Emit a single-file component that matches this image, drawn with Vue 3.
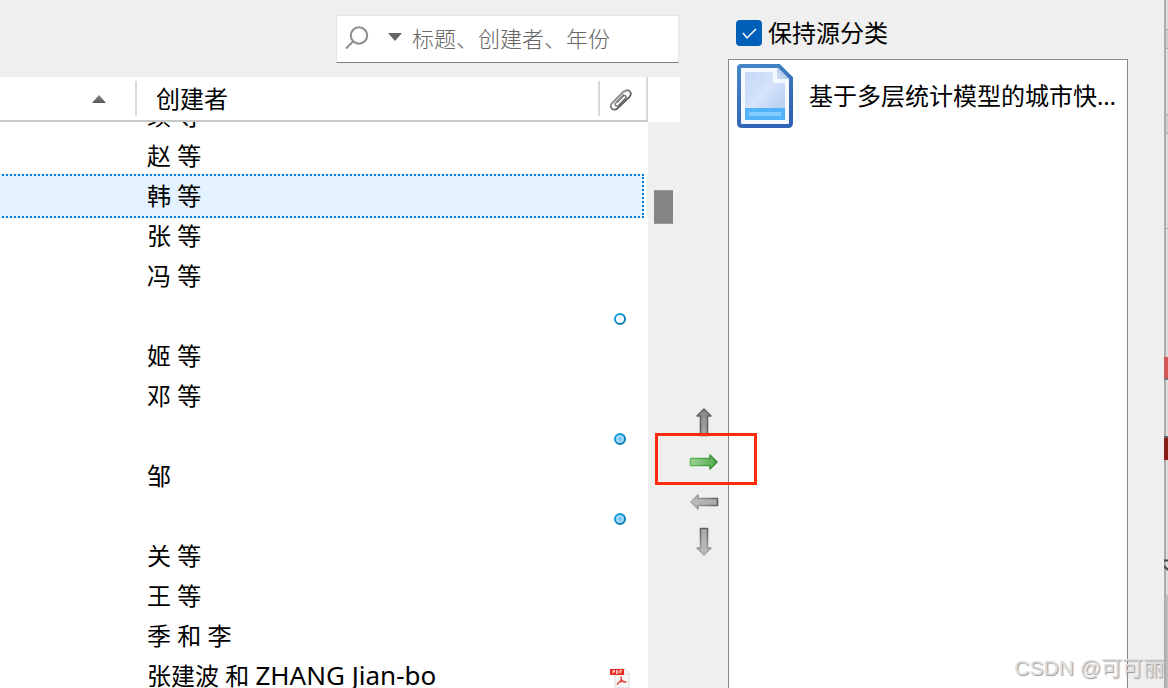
<script setup>
import { ref } from 'vue'

const rows = [
  { name: '续 等' },
  { name: '赵 等' },
  { name: '韩 等', selected: true },
  { name: '张 等' },
  { name: '冯 等' },
  { name: '', mark: 'open' },
  { name: '姬 等' },
  { name: '邓 等' },
  { name: '', mark: 'full' },
  { name: '邹' },
  { name: '', mark: 'full' },
  { name: '关 等' },
  { name: '王 等' },
  { name: '季 和 李' },
  { name: '张建波 和 ', latin: 'ZHANG Jian-bo', mark: 'pdf' },
]
const query = ref('')
const keep = ref(true)
const moves = [
  { label: '上移', turn: 'up' },
  { label: '添加', turn: 'right' },
  { label: '移除', turn: 'left' },
  { label: '下移', turn: 'down' },
]
</script>

<template>
  <main class="dialog">
    <section class="library">
      <div class="toolbar">
        <div class="search">
          <svg class="lens" width="24" height="24" viewBox="0 0 24 24" aria-hidden="true">
            <circle cx="14" cy="9.500" r="8.200" /><path d="M8 15.500 1 22.500" />
          </svg>
          <button class="drop" aria-label="搜索范围">
            <svg width="14" height="8" viewBox="0 0 14 8"><path d="M0 0h14L7 8z" fill="#646464" /></svg>
          </button>
          <input v-model="query" type="search" aria-label="搜索" placeholder="标题、创建者、年份" />
        </div>
      </div>
      <div class="tablewrap">
        <div class="clip">
          <table>
            <colgroup><col class="c-title" /><col /><col class="c-file" /></colgroup>
            <thead>
              <tr>
                <th class="sort" aria-label="标题">
                  <svg width="14" height="8" viewBox="0 0 14 8"><path d="M0 8h14L7 0z" fill="url(#sortg)" /><defs><linearGradient id="sortg" x2="0" y2="1"><stop stop-color="#888" /><stop offset="1" stop-color="#555" /></linearGradient></defs></svg>
                </th>
                <th class="creator">创建者</th>
                <th class="file" aria-label="附件">
                  <svg width="24" height="24" viewBox="0 0 24 24" fill="none" stroke-linecap="round" stroke-linejoin="round">
                    <defs><linearGradient id="clip" x2="1" y2="1"><stop offset=".2" stop-color="#aaa" /><stop offset=".8" stop-color="#3c3c3c" /></linearGradient></defs>
                    <path d="M8 14.500 14.500 8c1.600-1.300 3.600.6 2.200 2.200l-6.700 6.800c-2.800 2.600-5.400-.2-3-2.800l7.500-7.700" stroke="url(#clip)" stroke-width="1.300" />
                    <path d="M14.500 3.500 3.300 14.800c-4 4 1.200 9.500 5.200 5.500L20.500 8.800c3.500-4-1.300-8.500-5-5.300" stroke="url(#clip)" stroke-width="1.800" />
                  </svg>
                </th>
              </tr>
            </thead>
          </table>
          <div class="viewport">
            <table class="items">
              <colgroup><col class="c-title" /><col /><col class="c-file" /></colgroup>
              <tbody>
                <tr v-for="(row, i) in rows" :key="i" :class="{ selected: row.selected }">
                  <td class="lead"></td>
                  <td class="name">{{ row.name }}<span v-if="row.latin" class="latin">{{ row.latin }}</span></td>
                  <td class="mark">
                    <svg v-if="row.mark === 'pdf'" class="pdf" width="20" height="20" viewBox="0 0 20 20">
                      <path d="M5 1h10l4 4v15H5z" fill="#f6f6f6" stroke="#ddd" />
                      <path d="M14 1v5h5" fill="#fff" stroke="#ddd" />
                      <path d="M0 1h14v6H0z" fill="#e62c20" />
                      <path d="M3 5.500v-3h1.500v1.500H3M6.500 2.500v3h1.200l.6-1.500-.6-1.500zM10 5.500v-3h2M10 4h1.500" fill="none" stroke="#fff" stroke-width=".8" />
                      <path d="M11 9c1.500 1 0 3.500-3.500 7 0-2 6-3.500 8.500-2-2 .8-5-1.500-5-5z" fill="none" stroke="#e8443a" stroke-width="1.200" />
                    </svg>
                    <svg v-else-if="row.mark" width="12" height="12" viewBox="0 0 12 12">
                      <defs><linearGradient id="ring" x2="1" y2="1"><stop stop-color="#15a8e6" /><stop offset="1" stop-color="#0871a8" /></linearGradient></defs>
                      <circle cx="6" cy="6" r="5" :fill="row.mark === 'full' ? '#a5d8fa' : '#fff'" stroke="url(#ring)" stroke-width="2" />
                      <circle v-if="row.mark === 'full'" cx="6" cy="6" r="2" fill="#7ac5f3" />
                    </svg>
                  </td>
                </tr>
              </tbody>
            </table>
          </div>
        </div>
        <div class="scroll"><div class="corner"></div><div class="thumb"></div></div>
      </div>
    </section>

    <nav class="moves" aria-label="移动条目">
      <button v-for="m in moves" :key="m.turn" :class="m.turn" :aria-label="m.label">
        <svg width="30" height="18" viewBox="0 0 30 18">
          <defs>
            <linearGradient :id="'g' + m.turn">
              <stop :stop-color="m.turn === 'right' ? '#69b85f' : '#5c5c5c'" />
              <stop offset="1" :stop-color="m.turn === 'right' ? '#348c31' : m.turn === 'up' ? '#666' : '#b0b0b0'" />
            </linearGradient>
            <linearGradient :id="'f' + m.turn">
              <stop :stop-color="m.turn === 'right' ? '#a0d496' : '#aaa'" />
              <stop offset="1" :stop-color="m.turn === 'right' ? '#51a74b' : m.turn === 'up' ? '#858585' : '#bcbcbc'" />
            </linearGradient>
          </defs>
          <path d="M1.500 5.500H21V2l7 7-7 7v-3.500H1.500z" :fill="`url(#f${m.turn})`" :stroke="`url(#g${m.turn})`" stroke-width="1.600" stroke-linejoin="round" />
        </svg>
      </button>
      <div class="callout"></div>
    </nav>

    <section class="chosen">
      <label class="keep">
        <input v-model="keep" type="checkbox" />
        <svg class="tick" width="26" height="26" viewBox="0 0 26 26" aria-hidden="true"><path d="m7 13 4 5 9-9" fill="none" stroke="#fff" stroke-width="1.500" /></svg>
        <span>保持源分类</span>
      </label>
      <ul>
        <li>
          <svg width="58" height="66" viewBox="0 0 58 66" aria-hidden="true">
            <defs>
              <linearGradient id="edge" x2=".4" y2="1"><stop stop-color="#4787c8" /><stop offset="1" stop-color="#3062b5" /></linearGradient>
              <linearGradient id="sheet" x2="1" y2="1"><stop stop-color="#c3d7f5" /><stop offset=".45" stop-color="#d6e4fc" /><stop offset="1" stop-color="#adc8ea" /></linearGradient>
              <linearGradient id="fold" x1="1" x2="0" y2="1"><stop stop-color="#8fb4de" /><stop offset="1" stop-color="#d3e3f5" /></linearGradient>
            </defs>
            <path d="M5 3h38l12 12v45q0 3-3 3H6q-3 0-3-3V5q0-2 2-2z" fill="#f5f9ff" stroke="url(#edge)" stroke-width="4" />
            <path d="M9 9h28v11h12v36H9z" fill="url(#sheet)" />
            <path d="M41 4v12h12z" fill="url(#fold)" />
            <path d="M9 45h40v12H9z" fill="#51b3fa" />
            <path d="M13 49h32v4H13z" fill="#82ccff" />
          </svg>
          <span class="title">基于多层统计模型的城市快速路交通事故分析</span>
        </li>
      </ul>
    </section>

    <aside class="behind" aria-hidden="true">
      <i class="band one"></i><i class="band two"></i><i class="line"></i>
      <i class="red"></i><i class="red dark"></i>
      <svg class="scrap" width="4" height="14" viewBox="0 0 4 14"><path d="M0 1.500h4M0 7l4 4" stroke="#444" stroke-width="2" /></svg>
      <i class="foot"></i>
    </aside>
    <div class="watermark">CSDN @可可丽</div>
  </main>
</template>

<style>
body { margin: 0; overflow: hidden; }
</style>

<style scoped>
* { box-sizing: border-box; }
.dialog {
  position: relative;
  display: grid;
  grid-template-columns: minmax(0, 17fr) 48px minmax(0, 10fr) 36px 4px;
  height: 100vh;
  overflow: hidden;
  background: #efefef;
  color: #000;
  font: 24px/40px "Noto Sans", "Noto Sans CJK SC", sans-serif;
}
button { padding: 0; border: 0; background: none; display: flex; }
.library { display: flex; flex-direction: column; min-height: 0; }
.toolbar { display: flex; justify-content: flex-end; padding: 15px 1px 14px; }
.search {
  display: flex;
  align-items: center;
  width: 343px;
  height: 48px;
  padding: 0 8px;
  background: #fff;
  border: 1px solid #e6e6e6;
  border-bottom: 1px solid #808080;
}
.lens { fill: none; stroke: #8c8c8c; stroke-width: 2; margin-bottom: 2px; flex: none; }
.drop { margin: 0 10px 4px 19px; }
.search input {
  flex: 1;
  min-width: 0;
  padding: 0 0 4px;
  border: 0;
  outline: 0;
  background: none;
  font: 22px/32px "Noto Sans CJK SC", sans-serif;
  font-weight: 300;
}
.search input::placeholder { color: #666; opacity: 1; }
.tablewrap { display: flex; flex: 1; min-height: 0; }
.clip { flex: 1; min-width: 0; display: flex; flex-direction: column; background: #fff; }
table { width: 100%; border-collapse: separate; border-spacing: 0; table-layout: fixed; }
.c-title { width: 137px; }
.c-file { width: 48px; }
th { position: relative; height: 45px; padding: 0; border-bottom: 2px solid #c8c8c8; font-weight: 400; text-align: left; }
th svg { display: block; }
th::after { content: ""; position: absolute; right: 0; top: 4px; bottom: 4px; width: 2px; background: #d9d9d9; }
th.file::after { top: 0; bottom: 0; }
.sort svg { margin-left: 92px; }
.creator { padding-left: 19px; }
.file svg { margin: 2px 0 0 9px; }
.viewport { flex: 1; min-height: 0; overflow: hidden; }
.items { margin-top: -26px; }
td { height: 40px; padding: 0; line-height: 40px; white-space: nowrap; }
.name { padding-left: 10px; }
.latin { font-size: 26px; line-height: 32px; }
.mark svg { display: block; margin: 6px 0 0 14px; }
.mark .pdf { margin: 4px 0 0 10px; }
.selected { position: relative; }
.selected .name, .selected .mark { position: relative; z-index: 1; }
.selected .lead::before {
  content: "";
  position: absolute;
  inset: -2px 4px -2px -2px;
  background: #e3f2fe;
  border: 2px dotted #0078d7;
}
.scroll { width: 32px; flex: none; }
.corner { height: 45px; background: #fff; }
.thumb { width: 19px; height: 34px; margin: 68px 0 0 6px; background: #848484; border: solid #999; border-width: 1px 0; }
.moves { position: relative; display: flex; flex-direction: column; align-items: center; padding-top: 402px; }
.moves button { width: 40px; height: 40px; align-items: center; justify-content: center; }
.moves .up svg { transform: rotate(-90deg); }
.moves .left svg { transform: rotate(180deg); }
.moves .down svg { transform: rotate(90deg); }
.callout { position: absolute; z-index: 2; left: -25px; top: 433px; width: 102px; height: 52px; border: 3px solid #fb2b0b; pointer-events: none; }
.chosen { display: flex; flex-direction: column; min-height: 0; padding-top: 13px; }
.keep { position: relative; display: flex; align-items: center; gap: 6px; padding-left: 8px; margin-bottom: 6px; }
.keep input { appearance: none; width: 26px; height: 26px; margin: 0; border-radius: 4px; background: #005fb8; }
.keep .tick { position: absolute; left: 8px; }
ul { flex: 1; margin: 0; padding: 3px 7px; list-style: none; background: #fff; border: 1px solid #828790; border-bottom: 0; }
li { display: flex; align-items: center; gap: 15px; }
li svg { flex: none; }
.title { min-width: 0; overflow: hidden; white-space: nowrap; text-overflow: ellipsis; }
.behind { position: relative; grid-column: 5; background: linear-gradient(90deg, #acacac 2px, #dcdcdc 2px); }
.behind i, .scrap { position: absolute; right: 0; width: 2px; }
.band { height: 20px; background: #cecece; border: solid #aaa; border-width: 1px 0; }
.one { top: 29px; }
.two { top: 114px; }
.line { top: 228px; height: 1px; background: #aaa; }
.behind .red { top: 357px; width: 4px; height: 23px; background: #d25858; border-bottom: 2px solid #777; }
.behind .dark { top: 436px; height: 24px; background: #8a1c17; border-top: 2px solid #666; border-bottom: 0; }
.behind .scrap { top: 559px; width: 4px; }
.foot { top: 595px; bottom: 0; background: #bdbdbd; }
.watermark {
  position: absolute;
  right: 4px;
  bottom: 4px;
  font: 21px/32px "Liberation Sans", "Noto Sans CJK SC", sans-serif;
  color: #dedede;
  text-shadow: 1px 1px 1px #999;
  white-space: nowrap;
}
</style>
